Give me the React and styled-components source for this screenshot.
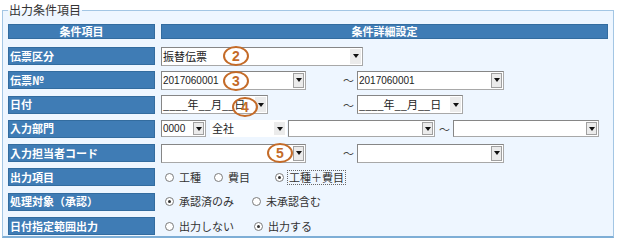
import React from 'react';
import styled, { createGlobalStyle, css } from 'styled-components';

const GlobalStyle = createGlobalStyle`
  html, body { margin: 0; padding: 0; background: #ffffff; }
  body {
    font-family: "Noto Sans CJK JP", "Noto Sans", sans-serif;
    font-size: 11px;
    color: #222;
  }
`;

const Page = styled.div`
  width: 618px;
  height: 240px;
  box-sizing: border-box;
  padding: 3px 4px 0 2px;
  overflow: hidden;
`;

const Fieldset = styled.fieldset`
  margin: 0;
  min-width: 0;
  height: 235px;
  box-sizing: border-box;
  border: 1px solid #a3c6e4;
  border-bottom: 2px solid #7eaed6;
  background: #eef6ff;
  padding: 7px 5px 2px 5px;
`;

const Legend = styled.legend`
  padding: 0 1px;
  font-size: 12px;
  line-height: 14px;
  color: #333;
`;

const HeaderGrid = styled.div`
  display: grid;
  grid-template-columns: 147px 447px;
  column-gap: 6px;
  grid-template-rows: 15px;
  margin-bottom: 8px;
`;

const BodyGrid = styled.div`
  display: grid;
  grid-template-columns: 147px 447px;
  column-gap: 6px;
  row-gap: 6.3px;
  grid-auto-rows: 18px;
`;

const LabelCell = styled.div`
  background: #3f7cb5;
  color: #fff;
  font-weight: bold;
  font-size: 11px;
  line-height: 1;
  border: 1px solid #336c9f;
  box-sizing: border-box;
  display: flex;
  align-items: center;
  justify-content: ${p => (p.$center ? 'center' : 'flex-start')};
  padding-left: ${p => (p.$center ? 0 : 1)}px;
  white-space: nowrap;
`;

const DetailCell = styled.div`
  position: relative;
  display: flex;
  align-items: center;
`;

const Range = styled.div`
  display: grid;
  grid-template-columns: 182px 14px auto;
  align-items: center;
`;

const Inline = styled.div`
  display: flex;
  align-items: center;
`;

const Tilde = styled.span`
  font-size: 11px;
  color: #444;
  margin: ${p => p.$m || '0'};
`;

const SelectBox = styled.div`
  width: ${p => p.$w}px;
  height: ${p => p.$h || 19}px;
  box-sizing: border-box;
  border: 1px solid ${p => (p.$plain ? 'transparent' : '#a8a8a8')};
  ${p =>
    !p.$plain &&
    css`
      border-top-color: #868686;
      border-left-color: #868686;
    `}
  background: #fff;
  display: flex;
  align-items: center;
  padding-left: 1px;
  margin-left: ${p => p.$ml || 0}px;
  flex: none;
`;

const Value = styled.span`
  flex: 1;
  min-width: 0;
  white-space: nowrap;
  color: #222;
  font-family: ${p =>
    p.$num ? '"Liberation Sans", Arial, sans-serif' : '"Noto Sans CJK JP", sans-serif'};
  font-size: ${p => (p.$num ? 10 : 11)}px;
  line-height: 15px;
`;

const Arrow = styled.span`
  width: 11px;
  height: calc(100% - 2px);
  margin-right: 1px;
  box-sizing: border-box;
  background: #ebebeb;
  border: 1px solid ${p => (p.$framed ? '#a0a0a0' : 'transparent')};
  display: flex;
  align-items: center;
  justify-content: center;
  flex: none;
  &::after {
    content: '';
    border-left: 3.5px solid transparent;
    border-right: 3.5px solid transparent;
    border-top: 4px solid #111;
  }
`;

const Marker = styled.span`
  position: absolute;
  left: ${p => p.$x}px;
  top: ${p => p.$y}px;
  width: 26px;
  height: 20px;
  box-sizing: border-box;
  border: 2px solid #c46b28;
  border-radius: 50%;
  color: #c46b28;
  font: bold 14px "Liberation Sans", Arial, sans-serif;
  line-height: 1;
  display: flex;
  align-items: center;
  justify-content: center;
  pointer-events: none;
`;

const RadioGroup = styled.div`
  display: flex;
  align-items: center;
  padding-left: 4px;
`;

const RadioItem = styled.label`
  display: flex;
  align-items: center;
  margin-right: ${p => p.$mr || 0}px;
  font-size: 11px;
  color: #333;
  white-space: nowrap;
`;

const RadioDot = styled.span`
  width: 9px;
  height: 9px;
  box-sizing: border-box;
  border-radius: 50%;
  border: 1px solid #7c7c7c;
  background: #fff;
  position: relative;
  margin-right: 3px;
  flex: none;
  ${p =>
    p.$checked &&
    css`
      &::after {
        content: '';
        position: absolute;
        left: 2px;
        top: 2px;
        width: 3px;
        height: 3px;
        border-radius: 50%;
        background: #333;
      }
    `}
`;

const RadioText = styled.span`
  line-height: 1;
  padding: 1px;
  border: 1px ${p => (p.$focus ? 'dotted #666' : 'solid transparent')};
`;

const Select = ({ w, h, value, num, framed, plain, ml }) => (
  <SelectBox $w={w} $h={h} $plain={plain} $ml={ml}>
    <Value $num={num}>{value}</Value>
    <Arrow $framed={framed} />
  </SelectBox>
);

const Radio = ({ label, checked, focus, mr }) => (
  <RadioItem $mr={mr}>
    <RadioDot $checked={checked} />
    <RadioText $focus={focus}>{label}</RadioText>
  </RadioItem>
);

const DATE = '____年__月__日';

export default function App() {
  return (
    <>
      <GlobalStyle />
      <Page>
        <Fieldset>
          <Legend>出力条件項目</Legend>
          <HeaderGrid>
            <LabelCell $center>条件項目</LabelCell>
            <LabelCell $center>条件詳細設定</LabelCell>
          </HeaderGrid>
          <BodyGrid>
            <LabelCell>伝票区分</LabelCell>
            <DetailCell>
              <Select w={202} value="振替伝票" />
              <Marker $x={62} $y={-1}>2</Marker>
            </DetailCell>

            <LabelCell>伝票№</LabelCell>
            <DetailCell>
              <Range>
                <Select w={145} value="2017060001" num framed />
                <Tilde>～</Tilde>
                <Select w={147} value="2017060001" num framed />
              </Range>
              <Marker $x={62} $y={0}>3</Marker>
            </DetailCell>

            <LabelCell>日付</LabelCell>
            <DetailCell>
              <Range>
                <Select w={107} value={DATE} />
                <Tilde>～</Tilde>
                <Select w={106} value={DATE} />
              </Range>
              <Marker $x={71} $y={1}>4</Marker>
            </DetailCell>

            <LabelCell>入力部門</LabelCell>
            <DetailCell>
              <Inline>
                <Select w={45} h={17} value="0000" num framed />
                <Select w={77} h={17} value="全社" plain ml={4} />
                <Select w={147} h={17} value="" framed ml={1} />
                <Tilde $m="0 3px 0 4px">～</Tilde>
                <Select w={146} h={17} value="" framed />
              </Inline>
            </DetailCell>

            <LabelCell>入力担当者コード</LabelCell>
            <DetailCell>
              <Range>
                <Select w={145} value="" framed />
                <Tilde>～</Tilde>
                <Select w={147} value="" framed />
              </Range>
              <Marker $x={106} $y={-1}>5</Marker>
            </DetailCell>

            <LabelCell>出力項目</LabelCell>
            <DetailCell>
              <RadioGroup>
                <Radio label="工種" mr={11} />
                <Radio label="費目" mr={23} />
                <Radio label="工種＋費目" checked focus />
              </RadioGroup>
            </DetailCell>

            <LabelCell>処理対象（承認）</LabelCell>
            <DetailCell>
              <RadioGroup>
                <Radio label="承認済のみ" checked mr={16} />
                <Radio label="未承認含む" />
              </RadioGroup>
            </DetailCell>

            <LabelCell>日付指定範囲出力</LabelCell>
            <DetailCell>
              <RadioGroup>
                <Radio label="出力しない" mr={18} />
                <Radio label="出力する" checked />
              </RadioGroup>
            </DetailCell>
          </BodyGrid>
        </Fieldset>
      </Page>
    </>
  );
}
